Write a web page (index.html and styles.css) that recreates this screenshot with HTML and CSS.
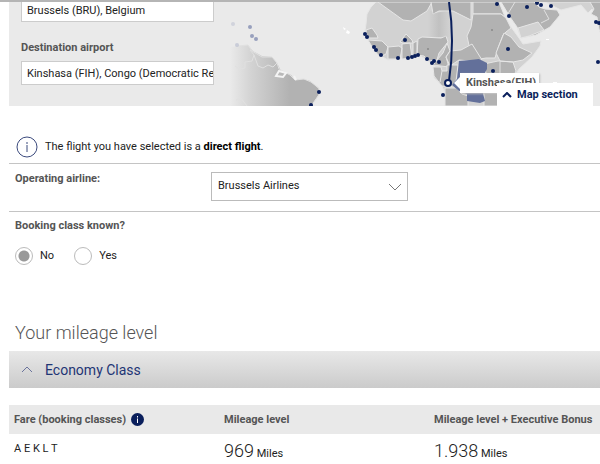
FILE: index.html
```
<!DOCTYPE html>
<html lang="en">
  <head>
    <meta charset="utf-8">
    <title>Mileage calculator</title>
    <meta name="viewport" content="width=device-width">
    <link rel="stylesheet" href="styles.css">
  </head>
  <body>
    <main>
      <section class="route">
        <div class="airports">
          <input type="text" class="airport" aria-label="Departure airport" value="Brussels (BRU), Belgium">
          <label for="destination">Destination airport</label>
          <input type="text" class="airport" id="destination" value="Kinshasa (FIH), Congo (Democratic Republic)">
        </div>
        <div class="map">
          <svg viewBox="220 2 380 104" preserveAspectRatio="xMinYMin slice" aria-hidden="true">
            <defs>
              <linearGradient id="fade" gradientUnits="userSpaceOnUse" x1="230" y1="0" x2="300" y2="0">
                <stop offset="0" stop-color="#eaeaea" />
                <stop offset=".3" stop-color="#d3d3d3" />
                <stop offset=".85" stop-color="#b2b2b2" />
              </linearGradient>
              <linearGradient id="shade" gradientUnits="userSpaceOnUse" x1="428" y1="0" x2="450" y2="0">
                <stop offset="0" stop-color="#999" stop-opacity="0" />
                <stop offset=".5" stop-color="#999" stop-opacity=".3" />
                <stop offset="1" stop-color="#999" stop-opacity="0" />
              </linearGradient>
            </defs>
            <!-- south america -->
            <path fill="url(#fade)" d="M230 47 L240 46 L248 45 L253 51 L262 56 L272 57 L277 63 L281 71 L291 75 L295 80 L303 79 L310 81 L319 89 L319 94 L311 106 H230Z" />
            <g class="coast">
              <path d="M238 46 L248 45 L252 51 L262 57 L272 57 L277 63 L279 69 L290 75 L295 80 L304 79 L311 82 L319 88 L319 95 L311 106" />
              <path d="M250 50 L254 55 L252 61 L245 62 L245 68 L239 69 L235 66 M254 55 L258 66 L263 68 L268 65 L273 67 L277 63 M236 100 L241 98 L247 106" />
            </g>
            <path class="delta" d="M279 71 L286 73 L283 77 L276 76Z M294 76 L296 80" />
            <path class="islet" d="M343 27 l3 2 l-2 1z M347 30 l3 2 l-1 2 l-3-1z" />
            <!-- africa -->
            <path class="land light" d="M376 2 L371 7 L367 14 L366 24 L365 31 L366 38 L372 44 L375 51 L381 56 L388 60 L399 58 L409 58 L418 55 L424 58 L429 62 L435 64 L434 78 L441 84 L445 93 L445 106 H505 L512 80 L519 69 L532 57 L540 46 L541 41 L523 44 L519 38 L511 27 L505 16 L499 2Z" />
            <path class="land" d="M378 2 L403 20 L411 21 L427 11 L432 2Z" />
            <path class="land" d="M431 2 L433 14 L439 11 L453 11 L471 20 L471 2Z" />
            <path class="land" d="M473 2 V14 H501 L505 17 L499 2Z" />
            <path class="land" d="M473 14 H501 L506 18 L511 28 L506 32 L503 35 L498 48 L495 58 L486 58 L480 59 L470 50 L467 36 L471 27Z" />
            <path class="land" d="M366 30 L372 28 L377 35 L378 38 L367 38Z M368 40 L382 41 L388 47 L386 54 L380 57 L374 50Z" />
            <path class="land" d="M388 47 L399 46 L402 48 L400 59 L388 59Z M400 42 L406 34 L412 40 L413 43 L403 43Z M402 44 L410 43 L412 58 L402 59Z" />
            <path class="land" d="M413 43 L417 41 L417 55 L413 57Z M418 39 L422 37 L441 38 L446 36 L448 42 L439 53 L437 60 L429 61 L424 56 L417 55Z" />
            <path class="land" d="M437 60 L443 53 L447 43 L450 51 L446 57 L449 67 L433 65Z" />
            <path class="land" d="M450 51 L461 50 L472 44 L482 60 L470 61 L459 60 L450 66 L446 57Z" />
            <path class="land" d="M433 67 H441 L442 71 H447 V65 H458 L456 81 L451 87 L442 86 L434 76Z M442 71 L440 82" />
            <path class="land" d="M445 88 H456 L462 94 L468 96 V106 H445Z" />
            <path class="land" d="M504 33 L511 37 L519 47 L532 53 L523 60 L513 62 L500 61 L496 53Z M484 64 L498 61 L513 62 L516 71 L512 80 L493 80 L486 73Z" />
            <path class="land" d="M484 93 L499 93 V106 H484Z" />
            <path class="congo" d="M459 61 L470 60 L479 59 L487 63 L487 69 L482 78 L482 90 L485 101 L480 103 L467 101 V94 L459 91 L452 85 L457 79Z" />
            <path fill="url(#shade)" d="M428 10 L436 13 L450 10 V37 H428Z" />
            <!-- arabia, iran, india -->
            <path class="land" d="M501 2 L510 17 L517 27 L521 38 L536 35 L550 27 L560 15 L557 10 L545 9 L539 7 L534 2Z" />
            <path class="land light" d="M518 28 L538 22 L544 30 L529 36 L521 38Z" />
            <path class="land light" d="M545 2 L551 5 L561 10 L581 5 L588 13 L592 9 L600 21 V2Z" />
            <path class="land" d="M590 2 L594 9 L591 14 L597 17 L599 29 L604 44 H606 V2Z" />
            <path class="border" d="M544 10 L549 19 L541 23 M506 17 L515 2 M500 62 V80" />
            <path class="islet" d="M546 39 h3 v1 h-3z M553 82 h4 v1 h-4z" />
            <!-- destinations -->
            <g class="faded">
              <circle cx="233" cy="24" r="2" opacity=".3" /><circle cx="237" cy="45" r="2" opacity=".4" />
              <circle cx="250" cy="27" r="2" /><circle cx="252" cy="36" r="2" /><circle cx="256" cy="39" r="2" />
            </g>
            <g class="dots">
              <circle cx="319" cy="92" r="2" /><circle cx="311" cy="105" r="2" />
              <circle cx="365" cy="34" r="2" /><circle cx="367" cy="37" r="2" />
              <circle cx="374" cy="47" r="2" /><circle cx="376" cy="50" r="2" />
              <circle cx="381" cy="55" r="2" /><circle cx="405" cy="40" r="2" />
              <circle cx="398" cy="58" r="2" /><circle cx="408" cy="58" r="2" />
              <circle cx="412" cy="57" r="2" /><circle cx="415" cy="56" r="2" /><circle cx="418" cy="55" r="2" />
              <circle cx="427" cy="59" r="2" /><circle cx="432" cy="63" r="2" />
              <circle cx="434" cy="61" r="2" /><circle cx="439" cy="62" r="2" /><circle cx="443" cy="95" r="2" />
              <circle cx="497" cy="4" r="2" /><circle cx="509" cy="16" r="2" /><circle cx="527" cy="7" r="2" />
              <circle cx="537" cy="3" r="2" /><circle cx="541" cy="5" r="2" /><circle cx="551" cy="6" r="2" />
              <circle cx="508" cy="49" r="2" /><circle cx="493" cy="71" r="2" />
              <circle cx="596" cy="22" r="2" /><circle cx="599" cy="23" r="2" /><circle cx="598" cy="62" r="2" />
            </g>
            <circle cx="428" cy="49" r="1" fill="#888" /><circle cx="492" cy="30" r="1" fill="#888" />
            <path class="flight" d="M449 2 Q455 40 449 81" />
            <circle class="target" cx="448" cy="83" r="3" />
            <path class="tip" d="M454 83 L460 77 V89Z" />
          </svg>
          <div class="tooltip">Kinshasa(FIH)</div>
          <button type="button" class="map-toggle">
            <svg width="10" height="6" viewBox="0 0 10 6" aria-hidden="true"><path d="M1 5 L5 1 L9 5" /></svg>
            Map section
          </button>
        </div>
      </section>

      <p class="notice">
        <svg width="22" height="22" viewBox="0 0 22 22" aria-hidden="true">
          <circle cx="11" cy="11" r="10" />
          <path d="M11 9 V16 M11 6 V8" />
        </svg>
        <span>The flight you have selected is a <b>direct flight</b>.</span>
      </p>

      <div class="row airline">
        <label for="airline">Operating airline:</label>
        <div class="select">
          <select id="airline">
            <option>Brussels Airlines</option>
          </select>
          <svg width="14" height="8" viewBox="0 0 14 8" aria-hidden="true"><path d="M1 1 L7 7 L13 1" /></svg>
        </div>
      </div>

      <fieldset class="row booking">
        <legend>Booking class known?</legend>
        <div class="choices">
          <label><input type="radio" name="known" value="no" checked>No</label>
          <label><input type="radio" name="known" value="yes">Yes</label>
        </div>
      </fieldset>

      <h2>Your mileage level</h2>
      <button type="button" class="accordion" aria-expanded="true">
        <svg width="12" height="7" viewBox="0 0 12 7" aria-hidden="true"><path d="M1 6 L6 1 L11 6" /></svg>
        Economy Class
      </button>

      <table>
        <thead>
          <tr>
            <th>
              <span class="fare">Fare (booking classes)
                <svg width="13" height="13" viewBox="0 0 13 13" aria-hidden="true">
                  <circle cx="6.5" cy="6.5" r="6.5" />
                  <path d="M6.5 5.5 V10 M6.5 3 V4.5" />
                </svg>
              </span>
            </th>
            <th>Mileage level</th>
            <th>Mileage level + Executive Bonus</th>
          </tr>
        </thead>
        <tbody>
          <tr>
            <td class="classes">A E K L T</td>
            <td><span class="miles">969</span> Miles</td>
            <td><span class="miles">1.938</span> Miles</td>
          </tr>
        </tbody>
      </table>
    </main>
  </body>
</html>
```

FILE: styles.css
```
* { box-sizing: border-box; margin: 0; padding: 0; }
body {
  border-top: 2px solid #b5b5b5;
  background: #fff;
  color: #222;
  font: 11px/14px Roboto, "Liberation Sans", Arial, sans-serif;
}

main {
  padding-left: 9px;
}

button, input, select {
  font: inherit;
  color: inherit;
}

svg {
  display: block;
  flex: none;
  fill: none;
}

label, legend, th {
  color: #555;
  font-weight: bold;
}

/* route and map */
.route {
  display: flex;
  height: 104px;
  overflow: hidden;
  background: #eaeaea;
}

.airports {
  display: flex;
  flex-direction: column;
  justify-content: flex-end;
  flex: none;
  width: 211px;
  padding: 0 6px 21px 12px;
}

.airport {
  flex: none;
  width: 193px;
  height: 24px;
  padding-left: 5px;
  border: 1px solid #ccc;
  background: #fff;
}

.airports label {
  margin: 19px 0 6px;
}

.map {
  position: relative;
  flex: 1;
}

.map > svg {
  width: 100%;
  height: 100%;
}

.land {
  fill: #b2b2b2;
  stroke: #e6e6e6;
}

.light {
  fill: #d2d2d2;
}

.congo {
  fill: #63709a;
}

.coast, .border {
  stroke: #e0e0e0;
}

.delta {
  stroke: #f4f4f4;
  stroke-width: 2;
}

.islet, .tip {
  fill: #fff;
}

.dots {
  fill: #0a1f5c;
}

.faded {
  fill: #98a0bd;
}

.flight {
  stroke: #0a1f5c;
  stroke-width: 2;
}

.target {
  fill: #fff;
  stroke: #0a1f5c;
  stroke-width: 2;
}

.tooltip {
  position: absolute;
  top: 71px;
  left: 240px;
  height: 20px;
  padding: 0 3px 0 6px;
  background: #fff;
  box-shadow: 1px 1px 2px #bbb;
  color: #555;
  font-weight: bold;
  line-height: 20px;
}

.map-toggle {
  position: absolute;
  right: 7px;
  bottom: 0;
  display: flex;
  align-items: center;
  gap: 5px;
  width: 96px;
  height: 23px;
  padding-left: 5px;
  border: 0;
  background: #fff;
  color: #0a1f5c;
  font-weight: bold;
}

.map-toggle path {
  stroke: #0a1f5c;
  stroke-width: 2;
}

/* flight details */
.notice {
  display: flex;
  align-items: center;
  gap: 7px;
  margin-top: 26px;
  padding: 4px 7px 5px;
}

.notice b {
  color: #000;
}

.notice svg {
  stroke: #3b4a7d;
}

.row {
  border: 0;
  border-top: 1px solid #c4c4c4;
  padding: 0 6px;
}

.airline {
  display: flex;
  height: 48px;
  padding-top: 8px;
}

.airline label {
  width: 196px;
}

.select {
  display: grid;
  align-items: center;
  width: 197px;
  height: 29px;
}

.select > * {
  grid-area: 1 / 1;
}

.select select {
  width: 100%;
  height: 100%;
  padding: 0 30px 2px 6px;
  border: 1px solid #bbb;
  border-radius: 0;
  background: #fff;
  appearance: none;
}

.select svg {
  justify-self: end;
  margin-right: 6px;
  stroke: #777;
  pointer-events: none;
}

.booking {
  padding-top: 7px;
}

.booking legend {
  float: left;
  width: 100%;
}

.choices {
  display: flex;
  clear: both;
  gap: 20px;
  padding-top: 14px;
}

.choices label {
  display: flex;
  align-items: center;
  gap: 7px;
  color: #222;
  font-weight: normal;
}

.choices input {
  width: 18px;
  height: 18px;
  border: 1px solid #bbb;
  border-radius: 50%;
  appearance: none;
}

.choices input:checked {
  background: radial-gradient(circle, #999 5px, #fff 6px);
}

/* mileage */
h2 {
  margin: 57px 6px 7px;
  color: #555;
  font-size: 18px;
  font-weight: 300;
  line-height: 22px;
}

.accordion {
  display: flex;
  align-items: center;
  gap: 12px;
  width: 100%;
  height: 37px;
  padding: 0 12px;
  border: 0;
  background: linear-gradient(#e8e8e8, #cbcbcb);
  color: #1e3575;
  font-size: 14px;
}

.accordion svg {
  stroke: #6a739c;
}

table {
  width: 100%;
  margin-top: 17px;
  border-collapse: collapse;
  table-layout: fixed;
}

th, td {
  padding-left: 5px;
  text-align: left;
  white-space: nowrap;
}

th:first-child, th:nth-child(2) {
  width: 210px;
}

th {
  height: 29px;
  background: #e9e9e9;
}

td {
  vertical-align: top;
}

.classes {
  padding-top: 8px;
}

.fare {
  display: flex;
  align-items: center;
  gap: 5px;
}

.fare circle {
  fill: #0a1f5c;
}

.fare path {
  stroke: #fff;
}

.miles {
  font-size: 18px;
  font-weight: 300;
  line-height: 34px;
}
```
